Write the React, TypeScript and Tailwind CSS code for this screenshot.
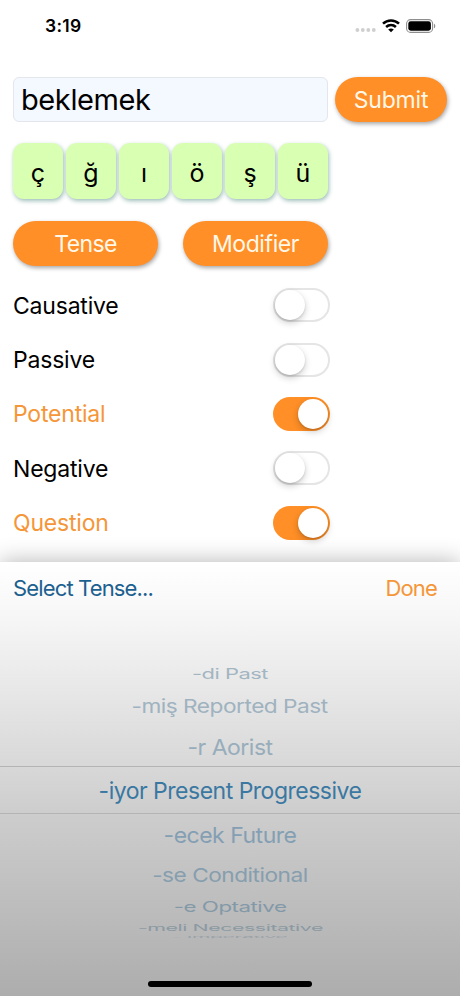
import { useState } from "react";
import clsx from "clsx";

const letters = ["ç", "ğ", "ı", "ö", "ş", "ü"];

const modifiers = [
  { label: "Causative", on: false },
  { label: "Passive", on: false },
  { label: "Potential", on: true },
  { label: "Negative", on: false },
  { label: "Question", on: true },
];

// Rows get flatter towards the top and bottom of the wheel.
const tenses = [
  { label: "-di Past", row: "h-5", text: "scale-y-[0.64] scale-x-[0.95] text-[#a3b5c1]" },
  { label: "-miş Reported Past", row: "h-11", text: "pt-[3px] scale-y-[0.82] scale-x-[0.985] text-[#9fb2bf]" },
  { label: "-r Aorist", row: "h-[38px]", text: "scale-y-[0.96] text-[#98adbb]" },
  { label: "-iyor Present Progressive", row: "h-12 border-y border-[#b4b4b4]", text: "pt-[3px] text-[#3a78a2]" },
  { label: "-ecek Future", row: "h-[42px]", text: "scale-y-[0.96] text-[#849fb3]" },
  { label: "-se Conditional", row: "h-[38px]", text: "pt-[3px] scale-y-[0.82] scale-x-[0.985] text-[#869eae]" },
  { label: "-e Optative", row: "h-[26px]", text: "scale-y-[0.64] scale-x-[0.97] text-[#8399a8]" },
  { label: "-meli Necessitative", row: "h-4", text: "scale-y-[0.38] scale-x-[0.93] text-[#8b99a3]" },
  { label: "- Imperative", row: "h-1", text: "scale-y-[0.08] scale-x-[0.92] text-[#9aa2a8]" },
];

function StatusBar() {
  return (
    <div className="flex h-[52px] items-center justify-between pr-[24px] pl-[45px]">
      <span className="text-[17.5px] leading-none font-semibold tracking-[0.3px]">3:19</span>
      <div className="flex items-center">
        <svg width="22" height="14" viewBox="0 0 22 14" fill="#cfcfcf">
          <circle cx="2.4" cy="11" r="1.9" />
          <circle cx="7.8" cy="11" r="1.9" />
          <circle cx="13.3" cy="11" r="1.9" />
          <circle cx="18.8" cy="11" r="1.9" />
        </svg>
        <svg width="18" height="14" viewBox="0 0 18 14" className="ml-[5px]" fill="none" stroke="#000" strokeWidth="2.5">
          <path d="M1 4.7C5.5.3 12.5.3 17 4.7" />
          <path d="M4.1 8c2.8-2.6 7-2.6 9.8 0" />
          <path d="M9 13.3 6.2 10.5c1.6-1.5 4-1.5 5.6 0Z" fill="#000" stroke="none" />
        </svg>
        <svg width="30" height="14" viewBox="0 0 30 14" className="ml-[6px]">
          <rect x="0.6" y="0.6" width="26" height="12.8" rx="4" fill="none" stroke="#8e8e8e" strokeWidth="1.1" />
          <rect x="2.3" y="2.3" width="22.6" height="9.4" rx="2.4" />
          <path d="M28 4.7c1.7.7 1.7 3.9 0 4.6Z" fill="#8e8e8e" />
        </svg>
      </div>
    </div>
  );
}

function PillButton({ label, className }: { label: string; className: string }) {
  return (
    <button
      className={clsx(
        "flex h-[45px] items-center justify-center rounded-full bg-[#ff8f26] pt-[2px] text-[#fff8e8] shadow-[1px_2px_4px_rgba(0,0,0,0.35)]",
        className,
      )}
    >
      {label}
    </button>
  );
}

function Toggle({ on, onClick }: { on: boolean; onClick: () => void }) {
  return (
    <button
      onClick={onClick}
      className={clsx(
        "flex h-[34px] w-[57px] items-center rounded-full",
        on ? "justify-end bg-[#ff8f26] pr-[2px]" : "border-2 border-[#e5e5e5] bg-white",
      )}
    >
      <span
        className={clsx(
          "rounded-full bg-white shadow-[0_3px_7px_rgba(0,0,0,0.2),0_1px_2px_rgba(0,0,0,0.12)]",
          on ? "size-[30px]" : "size-[30px]",
        )}
      />
    </button>
  );
}

export default function App() {
  const [rows, setRows] = useState(modifiers);

  const flip = (index: number) =>
    setRows(rows.map((r, i) => (i === index ? { ...r, on: !r.on } : r)));

  return (
    <div className="flex h-[996px] w-[460px] flex-col overflow-hidden bg-white font-[Inter,sans-serif] text-[23px] leading-none text-black">
      <StatusBar />

      <div className="mt-[25px] flex gap-[7px] pl-[13px]">
        <div className="flex h-[45px] w-[315px] items-center rounded-[6px] border border-[#e3e6ec] bg-[#f4f8ff] pl-[7px] text-[29px] tracking-[-0.4px]">
          beklemek
        </div>
        <PillButton label="Submit" className="w-[112px] tracking-[-0.2px]" />
      </div>

      <div className="mt-[21px] flex gap-[3px] pl-[13px]">
        {letters.map((letter) => (
          <button
            key={letter}
            className="flex h-[56px] w-[50px] items-center justify-center rounded-[11px] bg-[#d9ffb3] pt-[4px] text-[25px] shadow-[1px_2px_4px_rgba(40,110,100,0.45)]"
          >
            {letter}
          </button>
        ))}
      </div>

      <div className="mt-[22px] flex gap-[25px] pl-[13px]">
        <PillButton label="Tense" className="w-[145px] tracking-[-0.6px]" />
        <PillButton label="Modifier" className="w-[145px] tracking-[-0.4px]" />
      </div>

      <div className="mt-[12px] w-[330px] pl-[13px]">
        {rows.map((row, i) => (
          <div
            key={row.label}
            className={clsx(
              "flex h-[54.4px] items-center justify-between tracking-[-0.2px]",
              row.on && "text-[#f59638]",
            )}
          >
            <span className="pt-[2px]">{row.label}</span>
            <Toggle on={row.on} onClick={() => flip(i)} />
          </div>
        ))}
      </div>

      <div className="relative mt-[12px] flex flex-1 flex-col bg-[linear-gradient(#fff_0%,#f7f7f7_12%,#eeeeee_22%,#d8d8d8_47%,#cdcdcd_58%,#adadad_100%)] shadow-[0_0_22px_rgba(0,0,0,0.3)]">
        <div className="flex h-[52px] items-center justify-between pt-px pr-[23px] pl-[13px] text-[22px] tracking-[-0.85px]">
          <span className="text-[#1c6090]">Select Tense...</span>
          <button className="text-[#f59638]">Done</button>
        </div>

        <div className="mt-[50px] flex flex-col tracking-[-0.5px]">
          {tenses.map((tense) => (
            <div key={tense.label} className={clsx("flex items-center justify-center", tense.row)}>
              <span className={clsx("block pt-[2px] whitespace-nowrap", tense.text)}>{tense.label}</span>
            </div>
          ))}
        </div>

        <div className="mx-auto mt-auto mb-[9px] h-[6px] w-[164px] rounded-full bg-black" />
      </div>
    </div>
  );
}
